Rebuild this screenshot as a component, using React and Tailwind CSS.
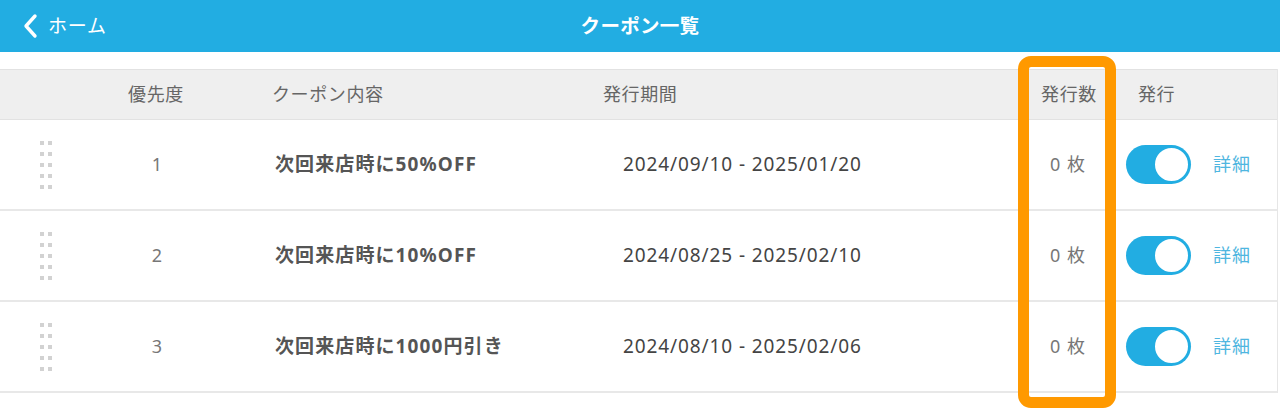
import React, { useState } from "react";

const coupons = [
  { id: 1, priority: 1, title: "次回来店時に50%OFF", period: "2024/09/10 - 2025/01/20", count: 0 },
  { id: 2, priority: 2, title: "次回来店時に10%OFF", period: "2024/08/25 - 2025/02/10", count: 0 },
  { id: 3, priority: 3, title: "次回来店時に1000円引き", period: "2024/08/10 - 2025/02/06", count: 0 },
];

const DragHandle = () => (
  <div className="grid grid-cols-[4px_4px] w-fit gap-x-[4px] gap-y-[7px]">
    {Array.from({ length: 10 }).map((_, i) => (
      <span key={i} className="block w-[4px] h-[4px] bg-[#d2d2d2]" />
    ))}
  </div>
);

const Toggle = ({ on, onClick }) => (
  <button
    onClick={onClick}
    className={`relative w-[65px] h-[39px] rounded-full ${on ? "bg-[#22ade2]" : "bg-[#dddddd]"}`}
  >
    <span
      className={`absolute top-[1px] w-[37px] h-[37px] rounded-full bg-white border-2 border-[#22ade2] ${
        on ? "right-[1px]" : "left-[1px]"
      }`}
    />
  </button>
);

const App = () => {
  const [issued, setIssued] = useState({ 1: true, 2: true, 3: true });

  return (
    <div
      className="relative w-[1280px] h-[419px] bg-white overflow-hidden text-[#666]"
      style={{ fontFamily: '"Noto Sans", "Noto Sans CJK JP", sans-serif' }}
    >
      {/* top bar */}
      <div className="h-[52px] bg-[#22ade2] flex items-center relative">
        <button className="flex items-center pl-[22px] text-white">
          <svg width="18" height="26" viewBox="0 0 18 26" fill="none">
            <path d="M13 3 L4 13 L13 23" stroke="white" strokeWidth="3.4" strokeLinecap="round" strokeLinejoin="round" />
          </svg>
          <span className="ml-[8px] text-[19px] tracking-[0.8px] leading-none">ホーム</span>
        </button>
        <h1 className="absolute left-0 right-0 text-center text-white font-bold text-[19.5px] tracking-[0.3px] pointer-events-none">
          クーポン一覧
        </h1>
      </div>

      <div className="h-[17px]" />

      {/* table */}
      <div className="border-r border-[#e6e6e6] w-[1278px]">
        <div className="h-[51px] flex items-center bg-[#efefef] border-y border-[#e2e2e2] text-[18px] tracking-[0.6px]">
          <div className="w-[100px]" />
          <div className="w-[110px] text-center pl-[2px]">優先度</div>
          <div className="w-[393px] pl-[62px]">クーポン内容</div>
          <div className="w-[415px]">発行期間</div>
          <div className="w-[100px] text-center pl-[2px]">発行数</div>
          <div className="pl-[20px]">発行</div>
        </div>

        {coupons.map((c) => (
          <div key={c.id} className="h-[91px] flex items-center border-b-2 border-[#e8e8e8] text-[18px]">
            <div className="w-[100px] pl-[40px]">
              <DragHandle />
            </div>
            <div className="w-[110px] text-center pl-[4px] text-[#777]">{c.priority}</div>
            <div className="w-[393px] pl-[65px] font-bold text-[#555] text-[19px] tracking-[1.1px]">{c.title}</div>
            <div className="w-[415px] pl-[20px] text-[#444] text-[19px] tracking-[0.9px]">{c.period}</div>
            <div className="w-[100px] text-center text-[#777] tracking-[1px]">
              {c.count}&nbsp;枚
            </div>
            <div className="pl-[8px] flex items-center">
              <Toggle on={issued[c.id]} onClick={() => setIssued((p) => ({ ...p, [c.id]: !p[c.id] }))} />
              <a href="#" className="ml-[22px] text-[#4fb6e0] tracking-[1px]">詳細</a>
            </div>
          </div>
        ))}
      </div>

      {/* highlight box */}
      <div className="absolute left-[1018px] top-[56px] w-[98px] h-[352px] border-[11px] border-[#ff9900] rounded-[13px] pointer-events-none" />
    </div>
  );
};

export default App;
